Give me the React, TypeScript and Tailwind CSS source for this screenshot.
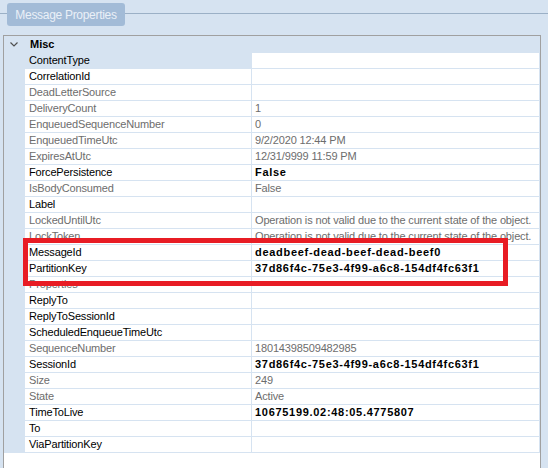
import React from "react";

type Row = { label: string; value: string; lg?: boolean; vs?: "gray" | "bold" | "none"; sel?: boolean };

const GUID = "37d86f4c-75e3-4f99-a6c8-154df4fc63f1";
const OP = "Operation is not valid due to the current state of the object.";

const rows: Row[] = [
  { label: "ContentType", value: "", sel: true },
  { label: "CorrelationId", value: "" },
  { label: "DeadLetterSource", value: "", lg: true },
  { label: "DeliveryCount", value: "1", lg: true, vs: "gray" },
  { label: "EnqueuedSequenceNumber", value: "0", lg: true, vs: "gray" },
  { label: "EnqueuedTimeUtc", value: "9/2/2020 12:44 PM", lg: true, vs: "gray" },
  { label: "ExpiresAtUtc", value: "12/31/9999 11:59 PM", lg: true, vs: "gray" },
  { label: "ForcePersistence", value: "False", vs: "bold" },
  { label: "IsBodyConsumed", value: "False", lg: true, vs: "gray" },
  { label: "Label", value: "" },
  { label: "LockedUntilUtc", value: OP, lg: true, vs: "gray" },
  { label: "LockToken", value: OP, lg: true, vs: "gray" },
  { label: "MessageId", value: "deadbeef-dead-beef-dead-beef0", vs: "bold" },
  { label: "PartitionKey", value: GUID, vs: "bold" },
  { label: "Properties", value: "", lg: true },
  { label: "ReplyTo", value: "" },
  { label: "ReplyToSessionId", value: "" },
  { label: "ScheduledEnqueueTimeUtc", value: "" },
  { label: "SequenceNumber", value: "18014398509482985", lg: true, vs: "gray" },
  { label: "SessionId", value: GUID, vs: "bold" },
  { label: "Size", value: "249", lg: true, vs: "gray" },
  { label: "State", value: "Active", lg: true, vs: "gray" },
  { label: "TimeToLive", value: "10675199.02:48:05.4775807", vs: "bold" },
  { label: "To", value: "" },
  { label: "ViaPartitionKey", value: "" },
];

export default function App() {
  return (
    <div
      className="relative w-[548px] h-[468px] overflow-hidden bg-[#d6e3f1]"
      style={{ fontFamily: '"Liberation Sans", Arial, sans-serif' }}
    >
      {/* tab strip */}
      <div className="flex items-start h-[35px] pt-[3px]">
        <div className="w-[7px] h-px mt-[10px] bg-[#9bb0c6]" />
        <div className="w-[118px] h-[23px] rounded-[3px] bg-[#a2bbd7] text-[#eaf0f7] text-[12px] tracking-[-0.3px] flex items-center justify-center">
          Message Properties
        </div>
        <div className="flex-1 h-px mt-[10px] bg-[#9bb0c6]" />
      </div>

      {/* property grid */}
      <div className="ml-[3px] w-[538px] h-[433px] border-t border-l border-r border-[#a0a0a0] bg-white flex flex-col">
        <div className="h-[17px] shrink-0 bg-[#d6e3f1] flex items-center">
          <svg width="8" height="5" viewBox="0 0 8 5" className="ml-[6px]">
            <path d="M0.5 0.5 L4 4 L7.5 0.5" fill="none" stroke="#505050" strokeWidth="1.2" />
          </svg>
          <span className="ml-[12px] text-[11px] font-bold text-black leading-[17px]">Misc</span>
        </div>
        {rows.map((r) => (
          <div key={r.label} className="flex h-[16px] shrink-0 border-b border-r border-[#d6e3f1] text-[11px] leading-[15px]">
            <div className="w-[21px] shrink-0 bg-[#d6e3f1]" />
            <div
              className={
                "w-[226px] shrink-0 pl-[4px] whitespace-nowrap overflow-hidden tracking-[-0.15px] " +
                (r.sel ? "bg-[#d6e3f1] " : "bg-white ") +
                (r.lg ? "text-[#6d6d6d]" : "text-black")
              }
            >
              {r.label}
            </div>
            <div className="w-px shrink-0 bg-[#d6e3f1]" />
            <div
              className={
                "flex-1 pl-[3px] whitespace-nowrap overflow-hidden bg-white " +
                (r.vs === "bold" ? "font-bold text-black tracking-[0.7px]" : "text-[#6d6d6d] tracking-[-0.15px]")
              }
            >
              {r.value}
            </div>
          </div>
        ))}
      </div>

      {/* red highlight */}
      <div className="absolute left-[23px] top-[238px] w-[485px] h-[48px] border-[5px] border-[#e81c24]" />
    </div>
  );
}
